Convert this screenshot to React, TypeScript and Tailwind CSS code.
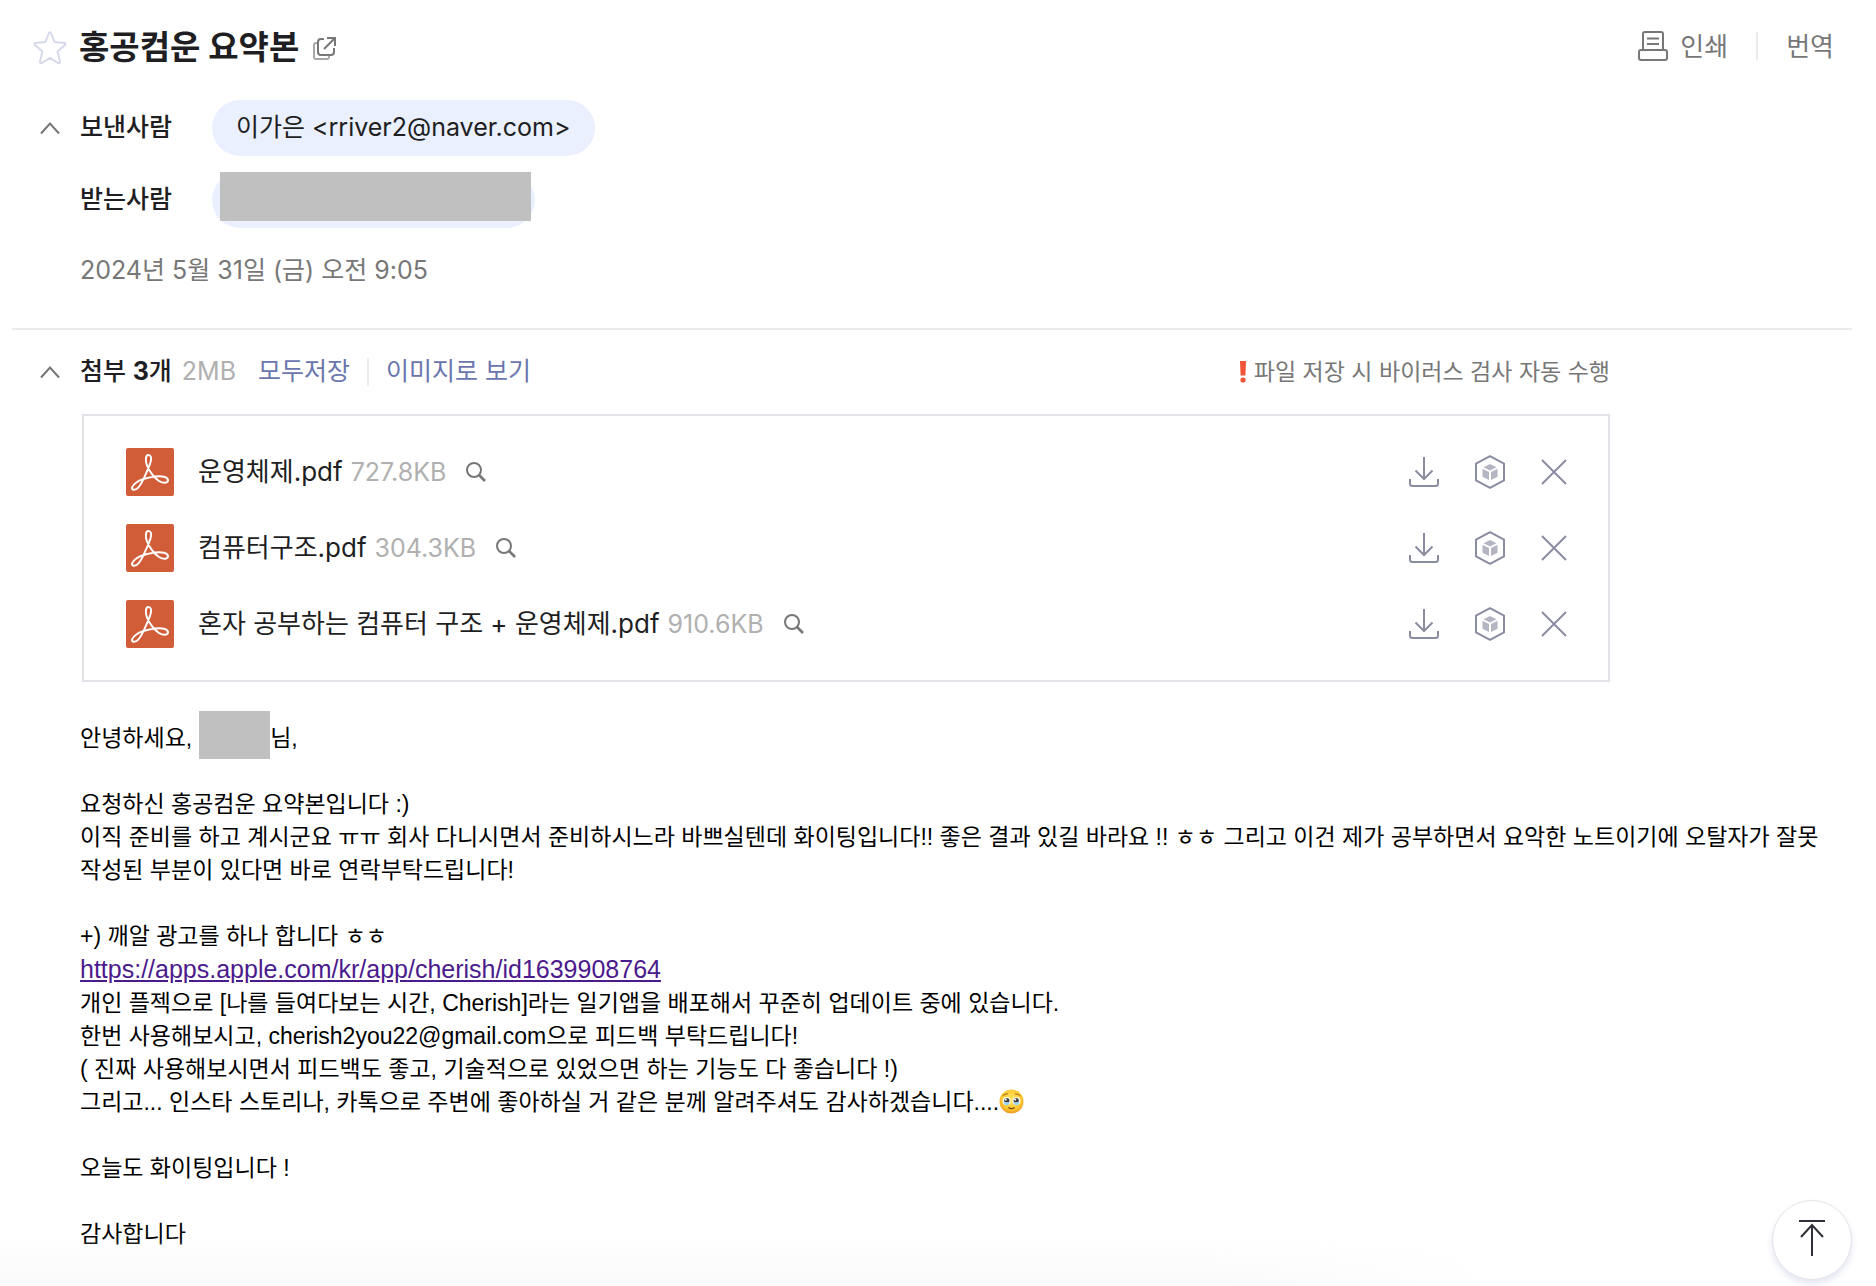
import React, { useState } from "react";

interface Attachment {
  id: string;
  name: string;
  size: string;
}

const attachments: Attachment[] = [
  { id: "os", name: "운영체제.pdf", size: "727.8KB" },
  { id: "arch", name: "컴퓨터구조.pdf", size: "304.3KB" },
  { id: "book", name: "혼자 공부하는 컴퓨터 구조 + 운영체제.pdf", size: "910.6KB" },
];

function StarIcon() {
  return (
    <svg width="34" height="34" viewBox="0 0 34 34" fill="none" stroke="#d5d9ea" strokeWidth="2" strokeLinejoin="round">
      <path d="M16 2 Q17 0.6 18 2 L21.6 11 L31.4 12 Q33.4 12.4 32 14 L24.6 20.4 L27 30.4 Q27.2 32.8 25 32 L17 26.8 L9 32 Q6.8 32.8 7 30.4 L9.4 20.4 L2 14 Q0.6 12.4 2.6 12 L12.4 11 Z" />
    </svg>
  );
}

function PopupIcon() {
  return (
    <svg width="24" height="24" viewBox="0 0 24 24" fill="none" strokeWidth="2">
      <path d="M4 7 H3 Q1 7 1 9 V21 Q1 23 3 23 H14 Q16 23 16 21 V20" stroke="#a8a8a8" />
      <path d="M11 3 H8 Q5 3 5 6 V16 Q5 19 8 19 H18 Q21 19 21 16 V12" stroke="#777" />
      <path d="M14 2 H22 V10 M22 2 L11 13" stroke="#777" />
    </svg>
  );
}

function ChevronIcon() {
  return (
    <svg width="20" height="14" viewBox="0 0 20 14" fill="none" stroke="#777" strokeWidth="2">
      <path d="M1 12.5 L10 2.5 L19 12.5" />
    </svg>
  );
}

function PrintIcon() {
  return (
    <svg width="30" height="30" viewBox="0 0 30 30" fill="none" stroke="#777" strokeWidth="2">
      <path d="M5 18 V3 Q5 1 7 1 H23 Q25 1 25 3 V18" />
      <rect x="1" y="19" width="28" height="10" rx="2" />
      <path d="M9 7.5 H21 M9 13 H21" />
    </svg>
  );
}

function PdfIcon() {
  return (
    <svg width="48" height="48" viewBox="0 0 48 48" fill="none">
      <rect width="48" height="48" rx="2" fill="#d05c38" />
      <path
        d="M22.5 7 C19.4 7 19.2 12.5 21 17.5 C22.8 22.5 28 29.6 33 33 C37.6 35.8 42 35 42 32.3 C42 29 35.6 27.4 29 28.6 C22 29.6 14.5 31.4 10 34.8 C5.8 38 5 41 7.4 41.7 C10.4 42.4 14.5 37.5 17.6 30.8 C20 25.6 23 19.5 24.6 14 C25.8 9.5 24.8 7 22.5 7 Z"
        stroke="#fff"
        strokeWidth="2"
        strokeLinejoin="round"
      />
    </svg>
  );
}

function SearchIcon() {
  return (
    <svg width="20" height="20" viewBox="0 0 20 20" fill="none" stroke="#777" strokeWidth="2">
      <circle cx="8" cy="8" r="7" />
      <path d="M12.5 12.5 L19 19" strokeWidth="2.6" />
    </svg>
  );
}

function DownloadIcon() {
  return (
    <svg width="30" height="34" viewBox="0 0 30 34" fill="none" stroke="#8a8ca2" strokeWidth="2">
      <path d="M15 2 V23 M6.5 15.5 L15 24 L23.5 15.5" />
      <path d="M1 24 V28.5 Q1 31 3.5 31 H26.5 Q29 31 29 28.5 V24" />
    </svg>
  );
}

function BoxIcon() {
  return (
    <svg width="30" height="34" viewBox="0 0 30 34" fill="none">
      <path d="M15 1.2 L29 8.6 V25.4 L15 32.8 L1 25.4 V8.6 Z" stroke="#8a8ca2" strokeWidth="2" strokeLinejoin="round" />
      <path d="M15 9 L21.5 12.2 L15 15.4 L8.5 12.2 Z M7.5 13.8 L14 17 V25 L7.5 21.8 Z M22.5 13.8 L16 17 V25 L22.5 21.8 Z" fill="#b4b5c3" />
    </svg>
  );
}

function CloseIcon() {
  return (
    <svg width="26" height="34" viewBox="0 0 26 34" fill="none" stroke="#8a8ca2" strokeWidth="2">
      <path d="M1 5 L25 29 M25 5 L1 29" />
    </svg>
  );
}

function TearyFace() {
  return (
    <svg className="inline-block align-[-4px]" width="25" height="25" viewBox="0 0 25 25" role="img" aria-label="🥹">
      <defs>
        <radialGradient id="face" cx="0.5" cy="0.4" r="0.6">
          <stop offset="0" stopColor="#ffe55c" />
          <stop offset="0.7" stopColor="#fcc934" />
          <stop offset="1" stopColor="#ee9a22" />
        </radialGradient>
      </defs>
      <circle cx="12.5" cy="12.5" r="12" fill="url(#face)" />
      <circle cx="7.6" cy="12" r="4" fill="#fff" />
      <circle cx="17.4" cy="12" r="4" fill="#fff" />
      <circle cx="7.8" cy="11.6" r="2.6" fill="#3b3a3c" />
      <circle cx="17.2" cy="11.6" r="2.6" fill="#3b3a3c" />
      <path d="M4.2 13.5 Q7.5 12.4 11 13.5 Q10 16.2 7.5 16.2 Q5 16.2 4.2 13.5 Z M14 13.5 Q17.5 12.4 20.8 13.5 Q20 16.2 17.5 16.2 Q15 16.2 14 13.5 Z" fill="#9fd6f5" />
      <circle cx="6.8" cy="10.6" r="1.1" fill="#fff" />
      <circle cx="16.2" cy="10.6" r="1.1" fill="#fff" />
      <path d="M4 6.5 Q6 4.6 8.5 4.8 M21 6.5 Q19 4.6 16.5 4.8" fill="none" stroke="#a35e14" strokeWidth="1" strokeLinecap="round" />
      <path d="M9.8 18.8 Q12.5 20.6 15.2 18.8" fill="none" stroke="#7b4212" strokeWidth="1.3" strokeLinecap="round" />
    </svg>
  );
}

function AttachmentRow({ file }: { file: Attachment }) {
  return (
    <li className="flex h-[76px] items-center">
      <PdfIcon />
      <div className="ml-6 flex items-baseline gap-2">
        <span className="text-[26px] text-[#1e1e23]">{file.name}</span>
        <span className="text-[25px] text-[#b0b0b0]">{file.size}</span>
      </div>
      <button type="button" aria-label="미리보기" className="ml-5">
        <SearchIcon />
      </button>
      <div className="ml-auto flex items-center gap-9">
        <button type="button" aria-label="다운로드">
          <DownloadIcon />
        </button>
        <button type="button" aria-label="MYBOX에 저장">
          <BoxIcon />
        </button>
        <button type="button" aria-label="삭제">
          <CloseIcon />
        </button>
      </div>
    </li>
  );
}

export default function App() {
  const [showDetail, setShowDetail] = useState(true);
  const [showFiles, setShowFiles] = useState(true);

  return (
    <main className="relative min-h-screen bg-white pb-9 font-[Inter,'Noto_Sans_CJK_KR',sans-serif] text-[#1e1e23]">
      {/* Subject and tools */}
      <header className="flex h-24 items-center justify-between pl-[33px] pr-[42px]">
        <div className="flex items-center">
          <button type="button" aria-label="중요 표시">
            <StarIcon />
          </button>
          <h1 className="ml-3 text-[33px] font-bold">홍공컴운 요약본</h1>
          <button type="button" aria-label="새 창으로 보기" className="ml-[14px]">
            <PopupIcon />
          </button>
        </div>
        <div className="flex items-center pb-1 text-[26px] text-[#777]">
          <button type="button" className="flex items-center gap-3">
            <PrintIcon />
            인쇄
          </button>
          <span className="mx-7 h-7 w-[2px] bg-[#ebebeb]" />
          <button type="button">번역</button>
        </div>
      </header>

      {/* Sender, receiver and date */}
      <section className="pl-10 pt-1 text-[25px]">
        <div className="flex items-center">
          <button type="button" aria-label="상세 정보 접기" onClick={() => setShowDetail(!showDetail)}>
            <ChevronIcon />
          </button>
          <span className="ml-5 w-[132px] font-medium">보낸사람</span>
          <button type="button" className="h-14 rounded-full bg-[#eaf0fd] px-6">
            이가은 &lt;rriver2@naver.com&gt;
          </button>
        </div>
        {showDetail && (
          <div className="mt-4 flex items-center pl-10">
            <span className="w-[132px] font-medium">받는사람</span>
            <span className="flex h-14 w-[323px] items-start rounded-full bg-[#eaf0fd] pl-2 pr-1">
              <span className="h-[49px] w-full bg-[#c0c0c0]" />
            </span>
          </div>
        )}
        <p className="mt-[22px] pl-10 leading-10 text-[#777]">2024년 5월 31일 (금) 오전 9:05</p>
      </section>

      <hr className="ml-3 mr-6 mt-[38px] border-t-2 border-[#ebebeb]" />

      {/* Attachments */}
      <section className="w-full max-w-[1610px]">
        <div className="flex h-21 items-center pl-10 text-[25px]">
          <button type="button" aria-label="첨부파일 접기" onClick={() => setShowFiles(!showFiles)}>
            <ChevronIcon />
          </button>
          <span className="ml-5 font-medium">
            첨부 <strong className="font-bold">3</strong>개
          </span>
          <span className="ml-[10px] text-[#b0b0b0]">2MB</span>
          <button type="button" className="ml-[22px] text-[#6a76ad]">
            모두저장
          </button>
          <span className="mx-[17px] h-7 w-[2px] bg-[#ebebeb]" />
          <button type="button" className="text-[#6a76ad]">
            이미지로 보기
          </button>
          <p className="ml-auto flex items-center gap-2 text-[23px] text-[#777]">
            <svg width="6" height="22" viewBox="0 0 6 22" fill="#f05336">
              <path d="M0 0 H6 L5.4 14.5 H0.6 Z" />
              <circle cx="3" cy="19" r="2.6" />
            </svg>
            파일 저장 시 바이러스 검사 자동 수행
          </p>
        </div>
        {showFiles && (
          <ul className="ml-[82px] border-2 border-[#e3e3e9] py-[18px] pl-[42px] pr-[41px]">
            {attachments.map((file) => (
              <AttachmentRow key={file.id} file={file} />
            ))}
          </ul>
        )}
      </section>

      {/* Message */}
      <article className="mt-10 pl-20 pr-9 font-['Liberation_Sans','Noto_Sans_CJK_KR',sans-serif] text-[23px] leading-[33px] break-keep text-black">
        <p className="flex h-[33px] items-center">
          안녕하세요,
          <span className="mb-2 ml-[7px] h-12 w-[71px] bg-[#c0c0c0]" />
          님,
        </p>
        <br />
        <p>요청하신 홍공컴운 요약본입니다 :)</p>
        <p>
          이직 준비를 하고 계시군요 ㅠㅠ 회사 다니시면서 준비하시느라 바쁘실텐데 화이팅입니다!! 좋은 결과 있길 바라요 !! ㅎㅎ 그리고
          이건 제가 공부하면서 요악한 노트이기에 오탈자가 잘못 작성된 부분이 있다면 바로 연락부탁드립니다!
        </p>
        <br />
        <p>+) 깨알 광고를 하나 합니다 ㅎㅎ</p>
        <p>
          <a href="https://apps.apple.com/kr/app/cherish/id1639908764" className="text-[25px] text-[#4b1a8c] underline">
            https://apps.apple.com/kr/app/cherish/id1639908764
          </a>
        </p>
        <p>개인 플젝으로 [나를 들여다보는 시간, Cherish]라는 일기앱을 배포해서 꾸준히 업데이트 중에 있습니다.</p>
        <p>한번 사용해보시고, cherish2you22@gmail.com으로 피드백 부탁드립니다!</p>
        <p>( 진짜 사용해보시면서 피드백도 좋고, 기술적으로 있었으면 하는 기능도 다 좋습니다 !)</p>
        <p>
          그리고... 인스타 스토리나, 카톡으로 주변에 좋아하실 거 같은 분께 알려주셔도 감사하겠습니다....
          <TearyFace />
        </p>
        <br />
        <p>오늘도 화이팅입니다 !</p>
        <br />
        <p>감사합니다</p>
      </article>

      {/* Soft shade along the bottom edge */}
      <div className="pointer-events-none fixed bottom-0 left-0 h-12 w-4/5 bg-linear-to-t from-[#f9f9f9] to-transparent mask-r-from-80%" />

      <button
        type="button"
        aria-label="맨 위로"
        onClick={() => window.scrollTo({ top: 0 })}
        className="fixed bottom-[6px] right-6 flex h-20 w-20 items-center justify-center rounded-full border border-[#e3e3e9] bg-white pb-1 shadow-[0_4px_6px_rgba(120,130,190,0.2)]"
      >
        <svg width="30" height="36" viewBox="0 0 30 36" fill="none" stroke="#303038" strokeWidth="2">
          <path d="M2 1 H28 M15 5 V36 M4 17 L15 5 L26 17" />
        </svg>
      </button>
    </main>
  );
}
